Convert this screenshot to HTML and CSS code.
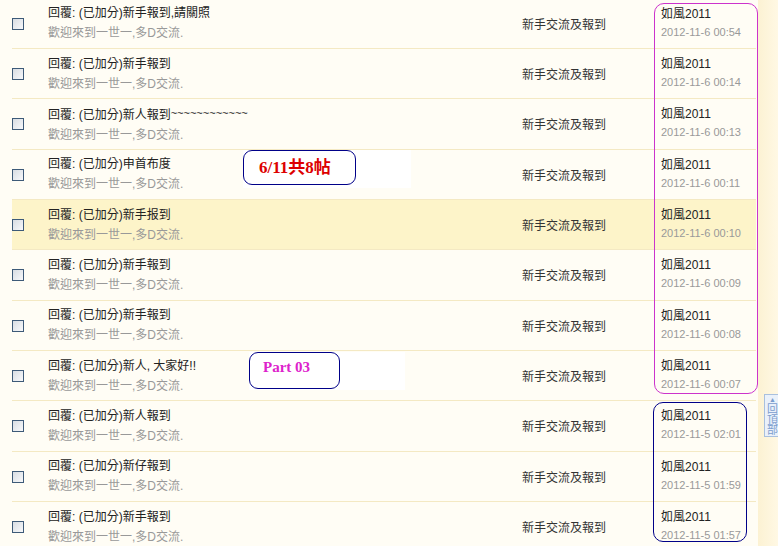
FILE: index.html
```html
<!DOCTYPE html>
<html>
<head>
<meta charset="utf-8">
<link rel="stylesheet" href="styles.css">
</head>
<body>
<div class="page">
  <div class="main">
    <div class="list">
      <div class="row"><span class="cb"></span><div class="subj"><div class="t">回覆: (已加分)新手報到,請關照</div><div class="s">歡迎來到一世一,多D交流.</div></div><div class="forum">新手交流及報到</div><div class="by"><div class="a">如風2011</div><div class="d">2012-11-6 00:54</div></div></div>
      <div class="row"><span class="cb"></span><div class="subj"><div class="t">回覆: (已加分)新手報到</div><div class="s">歡迎來到一世一,多D交流.</div></div><div class="forum">新手交流及報到</div><div class="by"><div class="a">如風2011</div><div class="d">2012-11-6 00:14</div></div></div>
      <div class="row"><span class="cb"></span><div class="subj"><div class="t">回覆: (已加分)新人報到<span class="wave">~~~~~~~~~~~~</span></div><div class="s">歡迎來到一世一,多D交流.</div></div><div class="forum">新手交流及報到</div><div class="by"><div class="a">如風2011</div><div class="d">2012-11-6 00:13</div></div></div>
      <div class="row"><span class="cb"></span><div class="subj"><div class="t">回覆: (已加分)申首布度</div><div class="s">歡迎來到一世一,多D交流.</div></div><div class="forum">新手交流及報到</div><div class="by"><div class="a">如風2011</div><div class="d">2012-11-6 00:11</div></div></div>
      <div class="row hl"><span class="cb"></span><div class="subj"><div class="t">回覆: (已加分)新手报到</div><div class="s">歡迎來到一世一,多D交流.</div></div><div class="forum">新手交流及報到</div><div class="by"><div class="a">如風2011</div><div class="d">2012-11-6 00:10</div></div></div>
      <div class="row"><span class="cb"></span><div class="subj"><div class="t">回覆: (已加分)新手報到</div><div class="s">歡迎來到一世一,多D交流.</div></div><div class="forum">新手交流及報到</div><div class="by"><div class="a">如風2011</div><div class="d">2012-11-6 00:09</div></div></div>
      <div class="row"><span class="cb"></span><div class="subj"><div class="t">回覆: (已加分)新手報到</div><div class="s">歡迎來到一世一,多D交流.</div></div><div class="forum">新手交流及報到</div><div class="by"><div class="a">如風2011</div><div class="d">2012-11-6 00:08</div></div></div>
      <div class="row"><span class="cb"></span><div class="subj"><div class="t">回覆: (已加分)新人, 大家好!!</div><div class="s">歡迎來到一世一,多D交流.</div></div><div class="forum">新手交流及報到</div><div class="by"><div class="a">如風2011</div><div class="d">2012-11-6 00:07</div></div></div>
      <div class="row"><span class="cb"></span><div class="subj"><div class="t">回覆: (已加分)新人報到</div><div class="s">歡迎來到一世一,多D交流.</div></div><div class="forum">新手交流及報到</div><div class="by"><div class="a">如風2011</div><div class="d">2012-11-5 02:01</div></div></div>
      <div class="row"><span class="cb"></span><div class="subj"><div class="t">回覆: (已加分)新仔報到</div><div class="s">歡迎來到一世一,多D交流.</div></div><div class="forum">新手交流及報到</div><div class="by"><div class="a">如風2011</div><div class="d">2012-11-5 01:59</div></div></div>
      <div class="row"><span class="cb"></span><div class="subj"><div class="t">回覆: (已加分)新手報到</div><div class="s">歡迎來到一世一,多D交流.</div></div><div class="forum">新手交流及報到</div><div class="by"><div class="a">如風2011</div><div class="d">2012-11-5 01:57</div></div></div>
    </div>
    <div class="mark pink"></div>
    <div class="mark navy"></div>
    <div class="note note1"><span class="bubble red">6/11共8帖</span></div>
    <div class="note note2"><span class="bubble mag">Part 03</span></div>
  </div>
  <div class="side">
    <a class="totop"><span class="arr">▲</span>回<br>頂<br>部</a>
  </div>
</div>
</body>
</html>
```

FILE: styles.css
```css
html, body {
  margin: 0;
  padding: 0;
  height: 100%;
  overflow: hidden;
}
body {
  background: #fffdf5;
  font-family: "Liberation Sans", "Noto Sans CJK TC", sans-serif;
  font-size: 12px;
}
.page {
  display: flex;
  height: 546px;
}
.main {
  position: relative;
  width: 758px;
  flex: none;
  background: #fffdf5;
  overflow: hidden;
}
.list {
  margin-top: -1.33px;
  margin-left: 12px;
  width: 744px;
}
.row {
  display: flex;
  align-items: center;
  box-sizing: border-box;
  height: 50.33px;
  border-bottom: 1px solid #f4e9c3;
}
.row.hl {
  background: #fdf4c9;
}
.cb {
  flex: none;
  width: 10px;
  height: 10px;
  border: 1px solid #3d5a78;
  background: linear-gradient(135deg, #d8dde3, #f7f8fa);
  margin-top: 1px;
}
.subj {
  width: 474px;
  margin-left: 24px;
  flex: none;
}
.t {
  color: #222;
  line-height: 20px;
  white-space: nowrap;
}
.wave {
  font-size: 11px;
  vertical-align: 2px;
}
.s {
  color: #999;
  line-height: 20px;
  white-space: nowrap;
}
.forum {
  width: 139px;
  flex: none;
  color: #333;
}
.by {
  flex: none;
}
.a {
  color: #222;
  line-height: 18px;
}
.d {
  color: #999;
  font-size: 11px;
  line-height: 19px;
}
.mark {
  position: absolute;
  box-sizing: border-box;
  border-radius: 10px;
}
.pink {
  left: 654px;
  top: 3px;
  width: 104px;
  height: 391px;
  border: 1px solid #cc33cc;
}
.navy {
  left: 653px;
  top: 402px;
  width: 94px;
  height: 140px;
  border: 1px solid #000088;
}
.note {
  position: absolute;
  background: #fff;
}
.note1 {
  left: 243px;
  top: 150px;
  width: 168px;
  height: 38px;
}
.note2 {
  left: 249px;
  top: 352px;
  width: 156px;
  height: 38px;
}
.bubble {
  display: block;
  box-sizing: border-box;
  border: 1px solid #000088;
  border-radius: 9px;
  font-family: "Liberation Serif", "Noto Sans CJK TC", serif;
  font-weight: bold;
}
.red {
  width: 113px;
  height: 35px;
  color: #dd0000;
  font-size: 17px;
  line-height: 33px;
  padding-left: 15px;
}
.mag {
  width: 91px;
  height: 37px;
  color: #dd22cc;
  font-size: 15px;
  line-height: 28px;
  padding-left: 13px;
}
.side {
  flex: 1;
  background: linear-gradient(90deg, #fcf2d3, #fff8e4);
  position: relative;
}
.totop {
  position: absolute;
  left: 6px;
  top: 394px;
  width: 18px;
  height: 43px;
  box-sizing: border-box;
  border: 1px solid #a9c0de;
  background: #eaf1fa;
  color: #7b9dce;
  font-size: 11px;
  line-height: 10.5px;
  padding: 1px 0 0 2px;
  white-space: nowrap;
}
.arr {
  display: block;
  font-size: 7px;
  line-height: 8px;
  padding-left: 2px;
}
```
